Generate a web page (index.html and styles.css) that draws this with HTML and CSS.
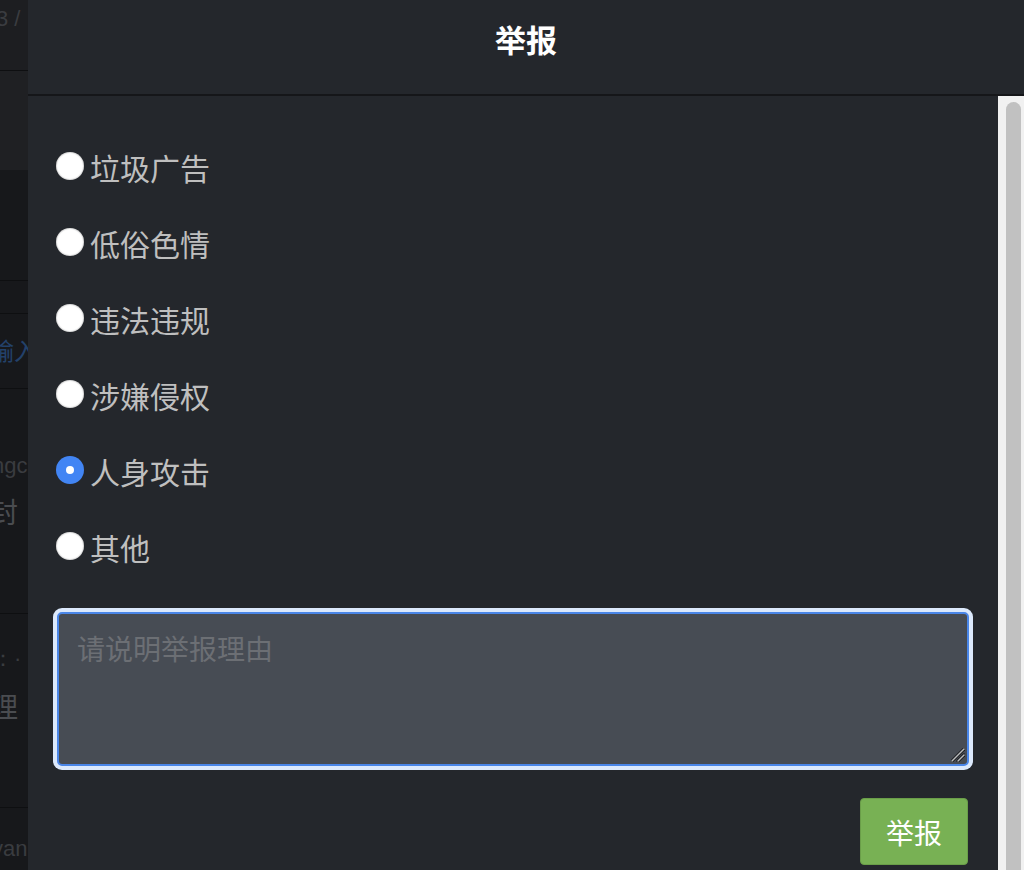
FILE: index.html
```html
<!DOCTYPE html>
<html lang="zh">
<head>
<meta charset="utf-8">
<title>举报</title>
<link rel="stylesheet" href="styles.css">
</head>
<body>
<div class="page">
  <div class="backdrop">
    <div class="bg-row r1"><span class="bg-txt small">3 /</span></div>
    <div class="bg-row r2"></div>
    <div class="bg-row r3"></div>
    <div class="bg-row r4"></div>
    <div class="bg-row r5"><span class="bg-txt blue">输入</span></div>
    <div class="bg-row r6"><span class="bg-txt small gc">ngc</span><span class="bg-txt big">封</span></div>
    <div class="bg-row r7"><span class="bg-txt small gc">：·</span><span class="bg-txt big">理</span></div>
    <div class="bg-row r8"><span class="bg-txt small gc">yan</span></div>
  </div>
  <div class="modal">
    <div class="modal-header">举报</div>
    <div class="modal-main">
      <div class="modal-body">
        <label class="opt"><span class="radio"></span><span class="opt-text">垃圾广告</span></label>
        <label class="opt"><span class="radio"></span><span class="opt-text">低俗色情</span></label>
        <label class="opt"><span class="radio"></span><span class="opt-text">违法违规</span></label>
        <label class="opt"><span class="radio"></span><span class="opt-text">涉嫌侵权</span></label>
        <label class="opt"><span class="radio checked"></span><span class="opt-text">人身攻击</span></label>
        <label class="opt"><span class="radio"></span><span class="opt-text">其他</span></label>
        <div class="reason-wrap">
          <textarea class="reason" placeholder="请说明举报理由"></textarea>
          <svg class="grip" width="14" height="14" viewBox="0 0 14 14">
            <path d="M1 13 L13 1" stroke="#1b1c1f" stroke-width="3.2" stroke-linecap="round"/>
            <path d="M7 13 L13 7" stroke="#1b1c1f" stroke-width="3.2" stroke-linecap="round"/>
            <path d="M1 13 L13 1" stroke="#b9bbbe" stroke-width="1.4" stroke-linecap="round"/>
            <path d="M7 13 L13 7" stroke="#b9bbbe" stroke-width="1.4" stroke-linecap="round"/>
          </svg>
        </div>
        <div class="actions"><button class="submit">举报</button></div>
      </div>
      <div class="scrollbar"><div class="thumb"></div></div>
    </div>
  </div>
</div>
</body>
</html>
```
FILE: styles.css
```css
* { box-sizing: border-box; }
html, body { margin: 0; padding: 0; }
body {
  width: 1024px;
  height: 870px;
  overflow: hidden;
  background: #16171a;
  font-family: "Noto Sans CJK SC", "Noto Sans", sans-serif;
}
.page { display: flex; height: 870px; }
.backdrop {
  width: 28px;
  flex: none;
  overflow: hidden;
  display: flex;
  flex-direction: column;
  background: #17181b;
}
.bg-row {
  border-bottom: 1px solid #0e0f11;
  display: flex;
  flex-direction: column;
  white-space: nowrap;
  color: #3e4045;
}
.r1 { height: 71px; background: #1d1e21; padding-top: 6px; }
.r2 { height: 99px; background: #1f2023; border-bottom: none; }
.r3 { height: 111px; }
.r4 { height: 33px; }
.r5 { height: 75px; padding-top: 18px; }
.r6 { height: 225px; padding-top: 64px; }
.r7 { height: 194px; padding-top: 30px; }
.r8 { flex: 1; padding-top: 28px; border-bottom: none; }
.bg-txt { display: block; margin-left: -6px; }
.small { font-family: "Liberation Sans", sans-serif; font-size: 22px; color: #3a3c40; }
.r1 .small { margin-left: -4px; }
.blue { font-size: 24px; color: #23416a; margin-left: -10px; }
.gc { margin-left: -8px; }
.big { font-size: 28px; color: #4a4c50; margin-left: -10px; margin-top: 12px; }

.modal {
  flex: 1;
  display: flex;
  flex-direction: column;
  background: #24272c;
}
.modal-header {
  height: 96px;
  flex: none;
  border-bottom: 2px solid #151619;
  display: flex;
  align-items: center;
  justify-content: center;
  color: #ffffff;
  font-size: 31px;
  font-weight: 700;
  padding-bottom: 18px;
}
.modal-main {
  flex: 1;
  display: flex;
  min-height: 0;
}
.modal-body {
  flex: 1;
  padding: 33px 28px 0 28px;
  display: flex;
  flex-direction: column;
}
.opt {
  height: 76px;
  display: flex;
  align-items: center;
  gap: 7px;
}
.radio {
  width: 28px;
  height: 28px;
  border-radius: 50%;
  background: #ffffff;
  box-shadow: inset 0 0 1px 1px rgba(0,0,0,0.15);
  flex: none;
  position: relative;
  top: -1px;
}
.radio.checked {
  background: #4285f4;
  box-shadow: none;
}
.radio.checked::after {
  content: "";
  position: absolute;
  left: 10px;
  top: 10px;
  width: 8px;
  height: 8px;
  border-radius: 50%;
  background: #ffffff;
}
.opt-text {
  color: #bfbfbf;
  font-size: 30px;
  line-height: 1;
  margin-left: -1px;
}
.reason-wrap {
  position: relative;
  margin: 27px 0 0 1px;
  width: 912px;
  height: 154px;
}
.reason {
  display: block;
  width: 912px;
  height: 154px;
  background: #474c54;
  border: 2px solid #4a86e8;
  border-radius: 5px;
  box-shadow: 0 0 0 4px #dce9fc;
  outline: none;
  padding: 16px 18px;
  color: #d0d0d0;
  font-family: "Noto Sans CJK SC", "Noto Sans", sans-serif;
  font-size: 28px;
  line-height: 1.3;
  resize: none;
}
.reason::placeholder { color: #6c6f74; }
.grip {
  position: absolute;
  right: 4px;
  bottom: 4px;
  pointer-events: none;
}
.actions {
  display: flex;
  justify-content: flex-end;
  margin-top: 32px;
  padding-right: 2px;
}
.submit {
  width: 108px;
  height: 67px;
  background: #78b154;
  border: 1px solid #6a9e49;
  border-radius: 4px;
  color: #ffffff;
  font-family: "Noto Sans CJK SC", "Noto Sans", sans-serif;
  font-size: 28px;
  padding: 0;
}
.scrollbar {
  width: 26px;
  flex: none;
  background: #f1f1f1;
  padding: 6px 3px 0 8px;
}
.thumb {
  width: 15px;
  height: 800px;
  border-radius: 8px;
  background: #c1c1c1;
}
```
